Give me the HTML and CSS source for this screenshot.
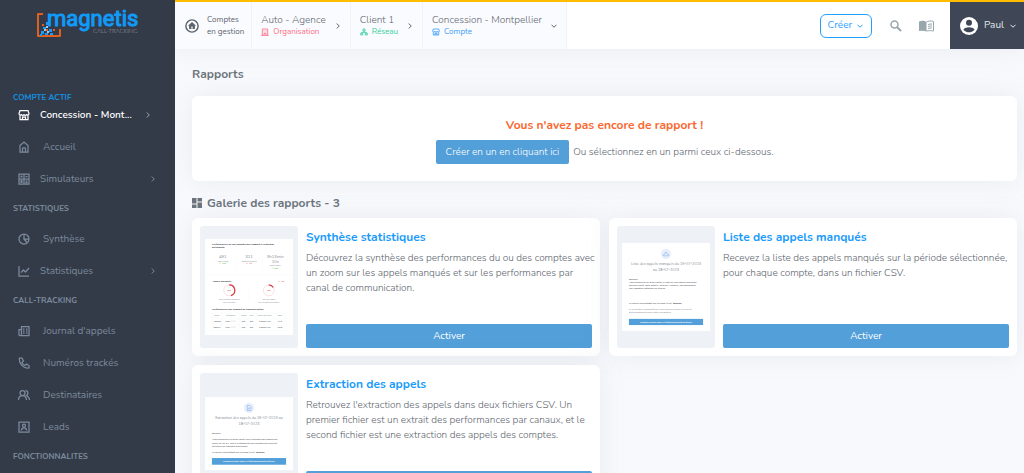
FILE: index.html
```html
<!DOCTYPE html>
<html lang="fr">
<head>
<meta charset="utf-8">
<meta name="viewport" content="width=device-width, initial-scale=1">
<title>Rapports - Magnetis</title>
<link rel="stylesheet" href="styles.css">
</head>
<body>
<svg class="sprite" aria-hidden="true">
  <symbol id="shop" viewBox="0 0 24 24"><path d="M4 3h16l2 6c0 4-5 4-5 1 0 4-5 4-5 0 0 4-5 4-5 0 0 3-5 3-5-1zM4 13v8h16v-8M9 21v-5h6v5"/></symbol>
  <symbol id="home" viewBox="0 0 24 24"><path d="M4 9l8-7 8 7v13H4zM9 22v-6c0-4 6-4 6 0v6"/></symbol>
  <symbol id="calc" viewBox="0 0 24 24"><path d="M2 2h20v20H2zM12 2v20M2 12h20M5 7h4M7 5v4M15 7h4M5 15l4 4M9 15l-4 4M15 16h4M15 19h4"/></symbol>
  <symbol id="pie" viewBox="0 0 24 24"><circle cx="12" cy="12" r="10"/><path d="M12 2v10h10M12 12l6 7"/></symbol>
  <symbol id="chart" viewBox="0 0 24 24"><path d="M2 2v20h20M6 15l5-5 4 4 7-8"/></symbol>
  <symbol id="news" viewBox="0 0 24 24"><path d="M7 3h15v18H4c-3 0-2-3-2-12h5zM7 9v9c0 2-1 3-2 3M10 8h3M16 8h3M10 12h3M16 12h3M10 16h3M16 16h3"/></symbol>
  <symbol id="phone" viewBox="0 0 24 24"><path d="M3 2h5l3 6-3 3c1 3 3 5 6 6l3-3 5 3v5C11 24 1 13 3 2z"/></symbol>
  <symbol id="people" viewBox="0 0 24 24"><circle cx="9" cy="8" r="5"/><path d="M1 22c0-12 16-12 16 0M15 3c6 0 6 8 2 10 4 2 6 5 6 9"/></symbol>
  <symbol id="lead" viewBox="0 0 24 24"><path d="M2 2h20v20H2zM7 19c0-7 10-7 10 0"/><circle cx="12" cy="9" r="3"/></symbol>
  <symbol id="right" viewBox="0 0 24 24"><path d="M7 2l10 10L7 22"/></symbol>
  <symbol id="down" viewBox="0 0 24 24"><path d="M2 7l10 10L22 7"/></symbol>
  <symbol id="building" viewBox="0 0 24 24"><path d="M4 22V3h16v19M1 22h22M9 22v-6h6v6M8 8h2M14 8h2M8 12h2M14 12h2"/></symbol>
  <symbol id="network" viewBox="0 0 24 24"><path d="M9 3h6v6H9zM2 16h6v5H2zM16 16h6v5h-6zM12 9v4M5 16v-3h14v3"/></symbol>
</svg>

<div class="app">
  <nav class="sidebar" aria-label="Menu principal">
    <a class="logo" href="#" aria-label="magnetis call-tracking">
      <svg viewBox="0 0 104 30" width="104" height="30">
        <path d="M6 5H1v22h22v-7" fill="none" stroke="#e2601f" stroke-width="2" stroke-linejoin="round"/>
        <text class="logo-name" x="10" y="17">magnetis</text>
        <text class="logo-sub" x="56" y="24">CALL-TRACKING</text>
        <path fill="#1a9bfa" d="M9 13h3v3H9zM6 18h3v2H6zM4 22h3v3H4zM12 20h3v3h-3zM8 24h3v2H8zM3 25h2v2H3zM13 24h3v2h-3z"/>
        <path fill="#9fcdf2" d="M9 17h2v2H9zM7 20h2v2H7zM10 22h2v2h-2z"/>
        <path fill="#e2601f" d="M5 15h2v2H5zM9 20h2v2H9zM16 20h2v2h-2z"/>
      </svg>
    </a>
    <h2 class="side-label side-label-active">Compte actif</h2>
    <a class="side-item side-account" href="#"><svg class="ico"><use href="#shop"/></svg><span>Concession - Mont...</span><svg class="chev"><use href="#right"/></svg></a>
    <a class="side-item side-leaf" href="#"><svg class="ico"><use href="#home"/></svg><span>Accueil</span></a>
    <a class="side-item" href="#"><svg class="ico"><use href="#calc"/></svg><span>Simulateurs</span><svg class="chev"><use href="#right"/></svg></a>
    <h2 class="side-label">Statistiques</h2>
    <a class="side-item side-leaf" href="#"><svg class="ico"><use href="#pie"/></svg><span>Synthèse</span></a>
    <a class="side-item" href="#"><svg class="ico"><use href="#chart"/></svg><span>Statistiques</span><svg class="chev"><use href="#right"/></svg></a>
    <h2 class="side-label">Call-tracking</h2>
    <a class="side-item side-leaf" href="#"><svg class="ico"><use href="#news"/></svg><span>Journal d'appels</span></a>
    <a class="side-item side-leaf" href="#"><svg class="ico"><use href="#phone"/></svg><span>Numéros trackés</span></a>
    <a class="side-item side-leaf" href="#"><svg class="ico"><use href="#people"/></svg><span>Destinataires</span></a>
    <a class="side-item side-leaf" href="#"><svg class="ico"><use href="#lead"/></svg><span>Leads</span></a>
    <h2 class="side-label">Fonctionnalites</h2>
  </nav>

  <div class="page">
    <header class="topbar">
      <nav class="crumbs" aria-label="Comptes">
        <a class="crumb crumb-home" href="#">
          <svg class="home-ico" viewBox="0 0 24 24"><circle cx="12" cy="12" r="10.5" fill="none" stroke="currentColor" stroke-width="2.500"/><path fill="currentColor" d="M12 5l-7 6.500h2V17h4v-4h2v4h4v-5.500h2z"/></svg>
          <span>Comptes<br>en gestion</span>
        </a>
        <a class="crumb" href="#"><span class="crumb-text"><span class="crumb-name">Auto - Agence</span><span class="crumb-kind kind-org"><svg><use href="#building"/></svg>Organisation</span></span><svg class="chev"><use href="#right"/></svg></a>
        <a class="crumb" href="#"><span class="crumb-text"><span class="crumb-name">Client 1</span><span class="crumb-kind kind-net"><svg><use href="#network"/></svg>Réseau</span></span><svg class="chev"><use href="#right"/></svg></a>
        <a class="crumb" href="#"><span class="crumb-text"><span class="crumb-name">Concession - Montpellier</span><span class="crumb-kind kind-acc"><svg><use href="#shop"/></svg>Compte</span></span><svg class="chev"><use href="#down"/></svg></a>
      </nav>
      <div class="tools">
        <button class="create" type="button">Créer <svg class="chev"><use href="#down"/></svg></button>
        <button class="tool" type="button" aria-label="Rechercher"><svg class="search-ico" viewBox="0 0 24 24"><circle cx="9" cy="9" r="7" fill="none" stroke="currentColor" stroke-width="3"/><path d="M14 14l8 8" stroke="currentColor" stroke-width="4"/></svg></button>
        <button class="tool" type="button" aria-label="Documentation"><svg class="book-ico" viewBox="0 0 30 24"><path fill="currentColor" d="M0 3c5-2 11-2 15 1v19c-4-2-10-2-15-1z"/><path fill="none" stroke="currentColor" stroke-width="2" d="M15 4c4-2 9-3 14-1v19c-5-1-10-1-14 0M18 9c3-1 5-1 8-1M18 13c3-1 5-1 8-1M18 17c3-1 5-1 8-1"/></svg></button>
        <button class="user" type="button"><svg class="avatar" viewBox="0 0 24 24"><circle cx="12" cy="12" r="12" fill="#fff"/><circle cx="12" cy="7.500" r="4" fill="#3f4756"/><path fill="#3f4756" d="M4.500 16.500c3-4 12-4 15 0-3 5-12 5-15 0z"/></svg>Paul <svg class="chev"><use href="#down"/></svg></button>
      </div>
    </header>

    <main class="content">
      <h1 class="title">Rapports</h1>
      <section class="card empty">
        <h2>Vous n'avez pas encore de rapport !</h2>
        <div class="empty-row"><button class="btn" type="button">Créer en un en cliquant ici</button><span>Ou sélectionnez en un parmi ceux ci-dessous.</span></div>
      </section>
      <h2 class="title gallery-title"><svg viewBox="0 0 20 20"><path fill="currentColor" d="M0 0h9v11H0zM11 0h9v7h-9zM0 13h9v7H0zM11 9h9v11h-9z"/></svg>Galerie des rapports - 3</h2>
      <div class="gallery">
        <article class="card report">
          <div class="thumb">
            <svg class="sheet" viewBox="0 0 356 392" aria-hidden="true">
              <rect width="356" height="392" fill="#fff"/>
              <g class="t-bold"><text x="28" y="24">Performances de vos comptes par rapport à la période</text><text x="28" y="37">précédente</text><text x="28" y="173">Appels manqués</text><text x="28" y="289">Performances par support de communication</text></g>
              <path d="M126 60v64M232 60v64M178 190v62M0 145h356" stroke="#eceff2" stroke-width="1"/>
              <g class="t-num"><text x="72" y="76">491</text><text x="178" y="76">311</text><text x="284" y="76">3h13min</text><text x="284" y="98">10s</text></g>
              <g class="t-mid"><text x="72" y="92">Appels reçus</text><text x="178" y="92">Contacts uniques</text><text x="284" y="111">Durée totale</text><text x="98" y="248">Taux d'appels manqués</text><text x="98" y="258">sur la période</text><text x="258" y="248">Taux de rappel</text><text x="258" y="258">sur les appels manqués</text></g>
              <g class="t-mid t-green"><text x="72" y="103">↗ 40%</text><text x="284" y="122">↗ 28%</text></g>
              <g class="t-mid t-red"><text x="178" y="103">↘ -1%</text><text x="308" y="173">↘ -3%</text><text x="98" y="212">45%</text><text x="258" y="212">15%</text></g>
              <g fill="none" stroke="#f6d4d7" stroke-width="3"><circle cx="98" cy="208" r="22"/><circle cx="258" cy="208" r="22"/></g>
              <path d="M98 186a22 22 0 0 1 7 43M258 186a22 22 0 0 1 18 10" fill="none" stroke="#d9363e" stroke-width="5"/>
              <path d="M28 299h300v72H28zM28 323h300M28 347h300M68 299v72M140 299v72M170 299v72M206 299v72M278 299v72" fill="none" stroke="#eceff2"/>
              <g class="t-mid"><text x="48" y="313">Canal</text><text x="104" y="313">Téléphone</text><text x="155" y="313">Appels</text><text x="188" y="313">Taux</text><text x="242" y="313">Durée moyenne</text><text x="303" y="313">Total</text></g>
              <g class="t-mid t-dark"><text x="48" y="337">Adwords</text><text x="104" y="337">0184 ******</text><text x="155" y="337">205</text><text x="188" y="337">200</text><text x="242" y="337">0:00min 13s</text><text x="303" y="337">71%</text><text x="48" y="361">Organic</text><text x="104" y="361">0184 ******</text><text x="155" y="361">205</text><text x="188" y="361">200</text><text x="242" y="361">0:00min 13s</text><text x="303" y="361">100%</text></g>
            </svg>
          </div>
          <div class="report-body">
            <h3>Synthèse statistiques</h3>
            <p>Découvrez la synthèse des performances du ou des comptes avec un zoom sur les appels manqués et sur les performances par canal de communication.</p>
            <button class="btn btn-wide" type="button">Activer</button>
          </div>
        </article>
        <article class="card report">
          <div class="thumb">
            <svg class="sheet" viewBox="0 0 356 356" aria-hidden="true">
              <rect width="356" height="356" fill="#fff"/>
              <circle cx="178" cy="44" r="21" fill="#e8effb"/><path d="M168 52h20v-5l-6-3c0-10-8-10-8 0l-6 3z" fill="none" stroke="#6f9fe6" stroke-width="2"/>
              <g class="t-head"><text x="178" y="91">Liste des appels manqués du 16-07-2023</text><text x="178" y="112">au 18-07-2023</text></g>
              <g class="t-par"><text x="28" y="150">Bonjour,</text><text x="28" y="162">Vous trouverez en pièce jointe la liste de vos appels manqués</text><text x="28" y="175">plus de clarté, pour Démo / Réseau Montreal, correspondant</text><text x="28" y="188">aux comptes rattachés au réseau.</text><text x="28" y="246">Le fichier est protégé par un code (Pin): <tspan font-weight="700">180539</tspan></text></g>
              <g class="t-par t-soft"><text x="28" y="270">Si le bouton n'apparaît pas, vous pouvez copier ce lien de</text><text x="28" y="283">téléchargement dans votre navigateur.</text></g>
              <rect x="28" y="307" width="300" height="25" fill="#539fd9"/><text class="t-btn" x="178" y="323">Cliquez ici pour ouvrir le téléchargement du fichier</text>
            </svg>
          </div>
          <div class="report-body">
            <h3>Liste des appels manqués</h3>
            <p>Recevez la liste des appels manqués sur la période sélectionnée, pour chaque compte, dans un fichier CSV.</p>
            <button class="btn btn-wide" type="button">Activer</button>
          </div>
        </article>
        <article class="card report">
          <div class="thumb">
            <svg class="sheet" viewBox="0 0 356 296" aria-hidden="true">
              <rect width="356" height="296" fill="#fff"/>
              <circle cx="178" cy="44" r="21" fill="#e8effb"/><path d="M171 34h10l5 5v16h-15zM175 50v-5M179 50v-9" fill="none" stroke="#6f9fe6" stroke-width="2"/>
              <g class="t-head"><text x="178" y="91">Extraction des appels du 16-07-2023 au</text><text x="178" y="112">18-07-2023</text></g>
              <g class="t-par"><text x="28" y="149">Bonjour,</text><text x="28" y="176">Vous trouverez en pièce jointe une extraction des appels du</text><text x="28" y="189">2023 au 18-07-2023 (l'intégralité des champs est ouverte)</text><text x="28" y="201">sélection de comptes demandée.</text><text x="28" y="225">Le fichier est protégé par un code (Pin): <tspan font-weight="700">180539</tspan></text></g>
              <rect x="28" y="247" width="300" height="27" fill="#539fd9"/><text class="t-btn" x="178" y="264">Cliquez ici pour ouvrir le téléchargement du fichier</text>
            </svg>
          </div>
          <div class="report-body">
            <h3>Extraction des appels</h3>
            <p>Retrouvez l'extraction des appels dans deux fichiers CSV. Un premier fichier est un extrait des performances par canaux, et le second fichier est une extraction des appels des comptes.</p>
            <button class="btn btn-wide" type="button">Activer</button>
          </div>
        </article>
      </div>
    </main>
  </div>
</div>
</body>
</html>
```

FILE: styles.css
```css
* { box-sizing: border-box; }

body {
  margin: 0;
  height: 100vh;
  overflow: hidden;
  background: #f8f9fd;
  color: #6c757d;
  font: 10px/15px Nunito, "Open Sans", sans-serif;
}

h1, h2, h3, p { margin: 0; }
a { color: inherit; text-decoration: none; }
button { font: inherit; color: inherit; border: 0; background: none; padding: 0; cursor: pointer; }
svg { flex: none; }
.sprite { position: absolute; width: 0; height: 0; }

.app {
  display: grid;
  grid-template-columns: 175px 1fr;
  height: 100vh;
}

/* Sidebar */
.sidebar {
  background: #343b48;
  color: #7b8a9c;
  overflow: hidden;
}
.logo { display: block; height: 91px; padding: 9px 0 0 37px; }
.logo svg { display: block; overflow: visible; }
.logo-name { font: 400 22px Roboto, sans-serif; fill: #0f9bfb; stroke: #0f9bfb; stroke-width: 1px; stroke-linejoin: round; }
.logo-sub { font: 300 6px Lato, sans-serif; fill: #a3a8b0; }

.side-label {
  height: 28px;
  padding: 6px 13px 0;
  font-size: 8px;
  line-height: 15px;
  font-weight: 700;
  text-transform: uppercase;
}
.side-label-active { height: 13px; padding-top: 0; line-height: 13px; color: #1290e0; }
.side-item {
  display: flex;
  align-items: center;
  gap: 10px;
  height: 32px;
  padding: 0 19px 0 18px;
}
.side-item .chev { margin-left: auto; }
.side-leaf { gap: 13px; }
.side-account { height: 27px; padding: 0 24px 5px 18px; color: #fff; font-weight: 600; }
.side-account .chev { color: #9aa6b5; }
.ico, .crumb-kind svg, .chev {
  width: 12px;
  height: 12px;
  fill: none;
  stroke: currentColor;
  stroke-width: 2.5;
}
.chev { width: 6px; height: 6px; stroke-width: 4; }

/* Top bar */
.page { display: flex; flex-direction: column; min-width: 0; overflow: hidden; font-weight: 300; color: #5c656e; }
.topbar {
  display: flex;
  flex: none;
  justify-content: space-between;
  height: 49px;
  border-top: 2px solid #ffbc00;
  background: #fff;
  box-shadow: 0 0 24px rgba(154, 161, 171, 0.15);
}
.crumbs { display: flex; background: #fafbfe; }
.crumb {
  display: flex;
  align-items: center;
  gap: 9px;
  padding: 0 9px;
  border-right: 1px solid #f1f3f7;
}
.crumb-home { gap: 8px; padding: 0 7px 0 10px; font-size: 8px; line-height: 12px; font-weight: 400; }
.home-ico { width: 14px; height: 14px; }
.crumb-text { display: flex; flex-direction: column; line-height: 12px; }
.crumb-name { font-size: 10px; }
.crumb-kind { display: flex; align-items: center; gap: 4px; font-size: 8px; font-weight: 400; }
.crumb-kind svg { width: 8px; height: 8px; }
.kind-org { color: #fa6b82; }
.kind-net { color: #35cf9a; }
.kind-acc { color: #3a9df8; }

.tools { display: flex; align-items: center; font-weight: 400; }
.create {
  display: flex;
  align-items: center;
  gap: 5px;
  height: 24px;
  margin-right: 18px;
  padding: 0 8px 0 7px;
  border: 1px solid #1fa2ff;
  border-radius: 6px;
  color: #1fa2ff;
}
.tool { display: flex; margin-right: 17px; color: #98a6ad; }
.tool + .tool { margin-right: 16px; }
.search-ico { width: 12px; height: 12px; }
.book-ico { width: 15px; height: 12px; }
.user {
  display: flex;
  align-items: center;
  align-self: stretch;
  gap: 6px;
  padding: 0 8px 0 10px;
  background: #3f4756;
  color: #e4e8ee;
}
.avatar { width: 18px; height: 18px; }

/* Content */
.content { padding: 17px 7px 0 17px; }
.title { font-size: 12px; line-height: 16px; font-weight: 700; color: #6c757d; }
.card {
  background: #fff;
  border-radius: 6px;
  box-shadow: 0 0 24px rgba(154, 161, 171, 0.15);
}
.empty {
  display: flex;
  flex-direction: column;
  align-items: center;
  gap: 7px;
  margin: 14px 0;
  padding: 21px 8px 17px;
}
.empty h2 { font-size: 12px; line-height: 16px; font-weight: 700; color: #fa6830; }
.empty-row { display: flex; align-items: center; gap: 4px; }
.btn {
  height: 24px;
  padding: 0 10px;
  border-radius: 2px;
  background: #539fd9;
  color: #fff;
}
.gallery-title { display: flex; align-items: center; gap: 5px; }
.gallery-title svg { width: 10px; height: 10px; }
.gallery {
  display: grid;
  grid-template-columns: 1fr 1fr;
  gap: 9px;
  margin-top: 7px;
}
.report { display: flex; gap: 8px; padding: 8px; }
.thumb {
  display: flex;
  flex: none;
  align-items: center;
  width: 98px;
  height: 122px;
  padding: 0 5px;
  border-radius: 3px;
  background: #eef1f6;
}
.sheet { width: 88px; }
.report-body { display: flex; flex: 1; flex-direction: column; }
.report-body h3 { margin: 3px 0 6px; font-size: 12px; line-height: 16px; font-weight: 700; color: #1a9bfa; }
.report-body p { margin-right: -4px; }
.btn-wide { width: 100%; margin-top: auto; font-weight: 400; }

/* Report previews */
.sheet text { font-family: Nunito, "Open Sans", sans-serif; font-weight: 400; font-size: 8px; fill: #858c94; }
.sheet .t-bold text { font-size: 10px; font-weight: 700; fill: #30363d; }
.sheet .t-num text { font-size: 17px; text-anchor: middle; }
.sheet .t-mid text { text-anchor: middle; }
.sheet .t-green text { fill: #4cb51f; }
.sheet .t-red text { fill: #d9363e; }
.sheet .t-dark text { fill: #3f464d; }
.sheet .t-head text { font-size: 15px; text-anchor: middle; }
.sheet .t-par text { font-size: 10px; fill: #3f464d; }
.sheet .t-soft text { fill: #858c94; }
.sheet .t-btn { font-size: 9px; font-weight: 700; fill: #fff; text-anchor: middle; }
```
